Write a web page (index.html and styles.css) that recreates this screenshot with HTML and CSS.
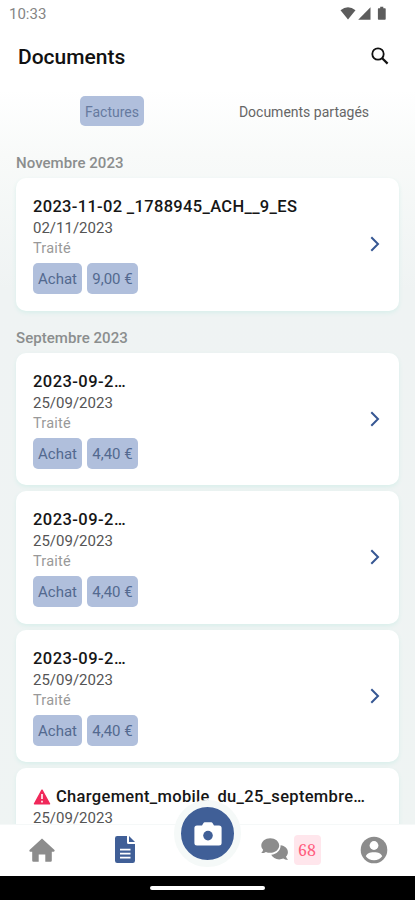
FILE: index.html
```html
<!DOCTYPE html>
<html lang="fr">
<head>
<meta charset="utf-8">
<meta name="viewport" content="width=device-width, initial-scale=1">
<title>Documents</title>
<link rel="stylesheet" href="styles.css">
</head>
<body>
<div class="app">
  <div class="status">
    <span class="time">10:33</span>
    <svg class="signals" width="47" height="16" viewBox="0 0 46 16" fill="#5c5c5c"><path d="M0 4.2Q7.5-1.6 15 4.2L7.5 13.6z"/><path d="M30 1.3v12.4H17.7z"/><path d="M38 2.3h1.7V.8h3.1v1.5h1.7q.7 0 .7.7v10q0 .8-.8.8h-6.2q-.8 0-.8-.8V3q0-.7.6-.7z"/></svg>
  </div>
  <header class="header">
    <h1>Documents</h1>
    <svg width="18" height="18" viewBox="0 0 18 18" fill="none" stroke="#111" stroke-width="1.8"><circle cx="7" cy="7" r="5.7"/><path d="M11.2 11.2l5.4 5.4" stroke-width="2.200"/></svg>
  </header>
  <nav class="tabs">
    <div class="tab"><span class="pill">Factures</span></div>
    <div class="tab"><span>Documents partagés</span></div>
  </nav>
  <main class="list">
    <h2>Novembre 2023</h2>
    <article class="card">
      <div class="info"><h3>2023-11-02 _1788945_ACH__9_ES</h3><p class="date">02/11/2023</p><p class="state">Traité</p><div class="chips"><span class="chip">Achat</span><span class="chip amount">9,00 €</span></div></div>
      <svg class="chevron" width="10" height="16" viewBox="0 0 10 16"><path d="M1.3 1.3L8 8l-6.7 6.7"/></svg>
    </article>
    <h2 class="next">Septembre 2023</h2>
    <article class="card">
      <div class="info"><h3 class="short">2023-09-2…</h3><p class="date">25/09/2023</p><p class="state">Traité</p><div class="chips"><span class="chip">Achat</span><span class="chip amount">4,40 €</span></div></div>
      <svg class="chevron" width="10" height="16" viewBox="0 0 10 16"><path d="M1.3 1.3L8 8l-6.7 6.7"/></svg>
    </article>
    <article class="card">
      <div class="info"><h3 class="short">2023-09-2…</h3><p class="date">25/09/2023</p><p class="state">Traité</p><div class="chips"><span class="chip">Achat</span><span class="chip amount">4,40 €</span></div></div>
      <svg class="chevron" width="10" height="16" viewBox="0 0 10 16"><path d="M1.3 1.3L8 8l-6.7 6.7"/></svg>
    </article>
    <article class="card">
      <div class="info"><h3 class="short">2023-09-2…</h3><p class="date">25/09/2023</p><p class="state">Traité</p><div class="chips"><span class="chip">Achat</span><span class="chip amount">4,40 €</span></div></div>
      <svg class="chevron" width="10" height="16" viewBox="0 0 10 16"><path d="M1.3 1.3L8 8l-6.7 6.7"/></svg>
    </article>
    <article class="card">
      <div class="info"><h3 class="upload"><svg width="18" height="16" viewBox="0 0 18 16"><path d="M9 1.2L16.5 14.8H1.5z" fill="#f0285a" stroke="#f0285a" stroke-width="1.5" stroke-linejoin="round"/><path d="M9 5v5M9 11.7v1.8" stroke="#fff" stroke-width="1.6"/></svg><span>Chargement_mobile_du_25_septembre…</span></h3><p class="date">25/09/2023</p></div>
    </article>
  </main>
  <footer class="bottom">
    <div class="item"><svg width="26" height="24" viewBox="0 0 26 24" fill="#8c8c8c"><path d="M13 .4L25.5 12q.6 1.6-.8 1.7h-1.9v8.8q0 1.2-1.2 1.2h-5.3v-7.3h-6.6v7.3H4.4q-1.2 0-1.2-1.2v-8.8H1.3Q0 13.5.5 12z"/></svg></div>
    <div class="item"><svg width="20" height="27" viewBox="0 0 20 27" fill="#405f97"><path d="M2.2 0H12v6.5q0 1.5 1.5 1.5H20v16.8q0 2.2-2.2 2.2H2.2Q0 27 0 24.8V2.2Q0 0 2.2 0z"/><path d="M14 0l6 6h-6z"/><path d="M5 13.6h10.5M5 17.6h10.5M5 21.6h10.5" stroke="#fff" stroke-width="1.6"/></svg></div>
    <div class="item camera"><div class="shutter"><svg width="28" height="24" viewBox="0 0 28 24"><path d="M3 3.5h5L9.5.9q.4-.6 1.2-.6h6.6q.8 0 1.2.6L20 3.5h5q2.6 0 2.6 2.6v15q0 2.5-2.6 2.5H3Q.4 23.6.4 21.1v-15Q.4 3.5 3 3.5z" fill="#fff"/><circle cx="14" cy="13.6" r="4.8" fill="#405f97"/></svg></div></div>
    <div class="item messages"><svg width="28" height="23" viewBox="0 0 28 23" fill="#8c8c8c"><path d="M9.2.3c5 0 9 3.2 9 7.2s-4 7.3-9 7.3c-1.600 0-3-.3-4.300-.9-1.300.8-2.900 1.300-4.700 1.200 1-1 1.700-2.300 1.900-3.300C.9 10.600.3 9.200.3 7.500c0-4 4-7.200 8.900-7.200z"/><path d="M19.600 7.300c4.200.5 7.300 3.300 7.300 6.900 0 1.700-.7 3.200-1.900 4.300.3 1.200 1 2.300 2.100 3.300-1.900.1-3.500-.4-4.800-1.200-1.200.5-2.600.8-4.100.8-3.600 0-6.700-1.900-8-4.600 5.300-.3 9.500-4.300 9.400-9.500z"/></svg><span class="badge">68</span></div>
    <div class="item"><svg width="28" height="28" viewBox="0 0 28 28"><circle cx="14" cy="14" r="13.300" fill="#8c8c8c"/><circle cx="14" cy="9.500" r="4.400" fill="#fff"/><path d="M5.800 20.300C7 17.700 9.300 16.300 14 16.300s7 1.400 8.200 4q-3 4-8.200 4t-8.200-4z" fill="#fff"/></svg></div>
  </footer>
  <div class="system"><span class="handle"></span></div>
</div>
</body>
</html>
```
FILE: styles.css
```css
* { box-sizing: border-box; }
body, h1, h2, h3, p { margin: 0; }
body { font-family: Roboto, "Liberation Sans", sans-serif; }
.app { width: 415px; height: 900px; overflow: hidden; display: flex; flex-direction: column; background: linear-gradient(#fff 0, #fff 90px, #f8faf9 155px, #eff3f3 290px, #eff4f3 100%); }
.app > * { flex-shrink: 0; }
.status { height: 28px; padding: 0 28px 0 9px; display: flex; justify-content: space-between; align-items: center; }
.time { font-size: 15px; color: #858585; }
.signals { margin-top: -1px; }
.header { height: 56px; padding: 0 26px 0 18px; display: flex; justify-content: space-between; align-items: center; }
h1 { font-size: 21px; font-weight: 500; line-height: 28px; color: #111; padding-top: 1px; }
.tabs { height: 69px; padding: 0 15px 0 16px; display: grid; grid-template-columns: 1fr 1fr; font-size: 14px; color: #666; }
.tab { display: flex; justify-content: center; align-items: flex-start; line-height: 32px; padding-top: 12px; }
.pill { height: 30px; padding: 0 5px; border-radius: 5px; background: #b0bfdc; color: #667a9f; }
.list { height: 671px; padding: 0 16px; overflow: hidden; }
h2 { height: 25px; font-size: 15px; line-height: 21px; font-weight: 500; color: #8b8e8e; letter-spacing: .05px; }
.next { margin-top: 17px; }
.card { height: 132.700px; margin-bottom: 5.800px; padding: 18px 19px 0 17px; display: flex; justify-content: space-between; background: #fff; border-radius: 10px; box-shadow: 0 2px 4px #d9efeb; }
.info { white-space: nowrap; }
h3 { font-size: 16.5px; line-height: 22px; font-weight: 500; color: #161616; letter-spacing: .32px; }
.short { letter-spacing: .45px; }
.date { font-size: 15px; line-height: 21px; color: #555; }
.state { font-size: 14.5px; line-height: 20px; color: #999; letter-spacing: .2px; }
.chips { display: flex; gap: 5px; margin-top: 4px; }
.chip { width: 49px; height: 31px; border-radius: 5px; background: #b0bfdc; color: #53698f; font-size: 15px; line-height: 33px; text-align: center; }
.amount { width: 51px; }
.chevron { margin-top: 40px; fill: none; stroke: #365793; stroke-width: 2; }
.upload { display: flex; gap: 5px; align-items: center; }
.bottom { height: 52px; background: #fff; display: grid; grid-template-columns: repeat(5, 1fr); grid-template-rows: 49px; border-top: 1px solid #f5f8f8; }
.item { display: flex; align-items: center; justify-content: center; }
.camera { position: relative; top: -16px; }
.shutter { width: 67px; height: 67px; flex: none; border: 7px solid #f5f9f8; border-radius: 50%; background: #405f97; display: flex; align-items: center; justify-content: center; }
.messages { gap: 5px; }
.badge { width: 27px; height: 30px; border-radius: 4px; background: #ffe6ec; color: #ff5c7d; font: 16px/31px "Noto Serif", "Liberation Serif", serif; text-align: center; }
.system { height: 24px; background: #000; display: flex; justify-content: center; align-items: center; }
.handle { width: 115px; height: 4px; border-radius: 2px; background: #fff; }
```
